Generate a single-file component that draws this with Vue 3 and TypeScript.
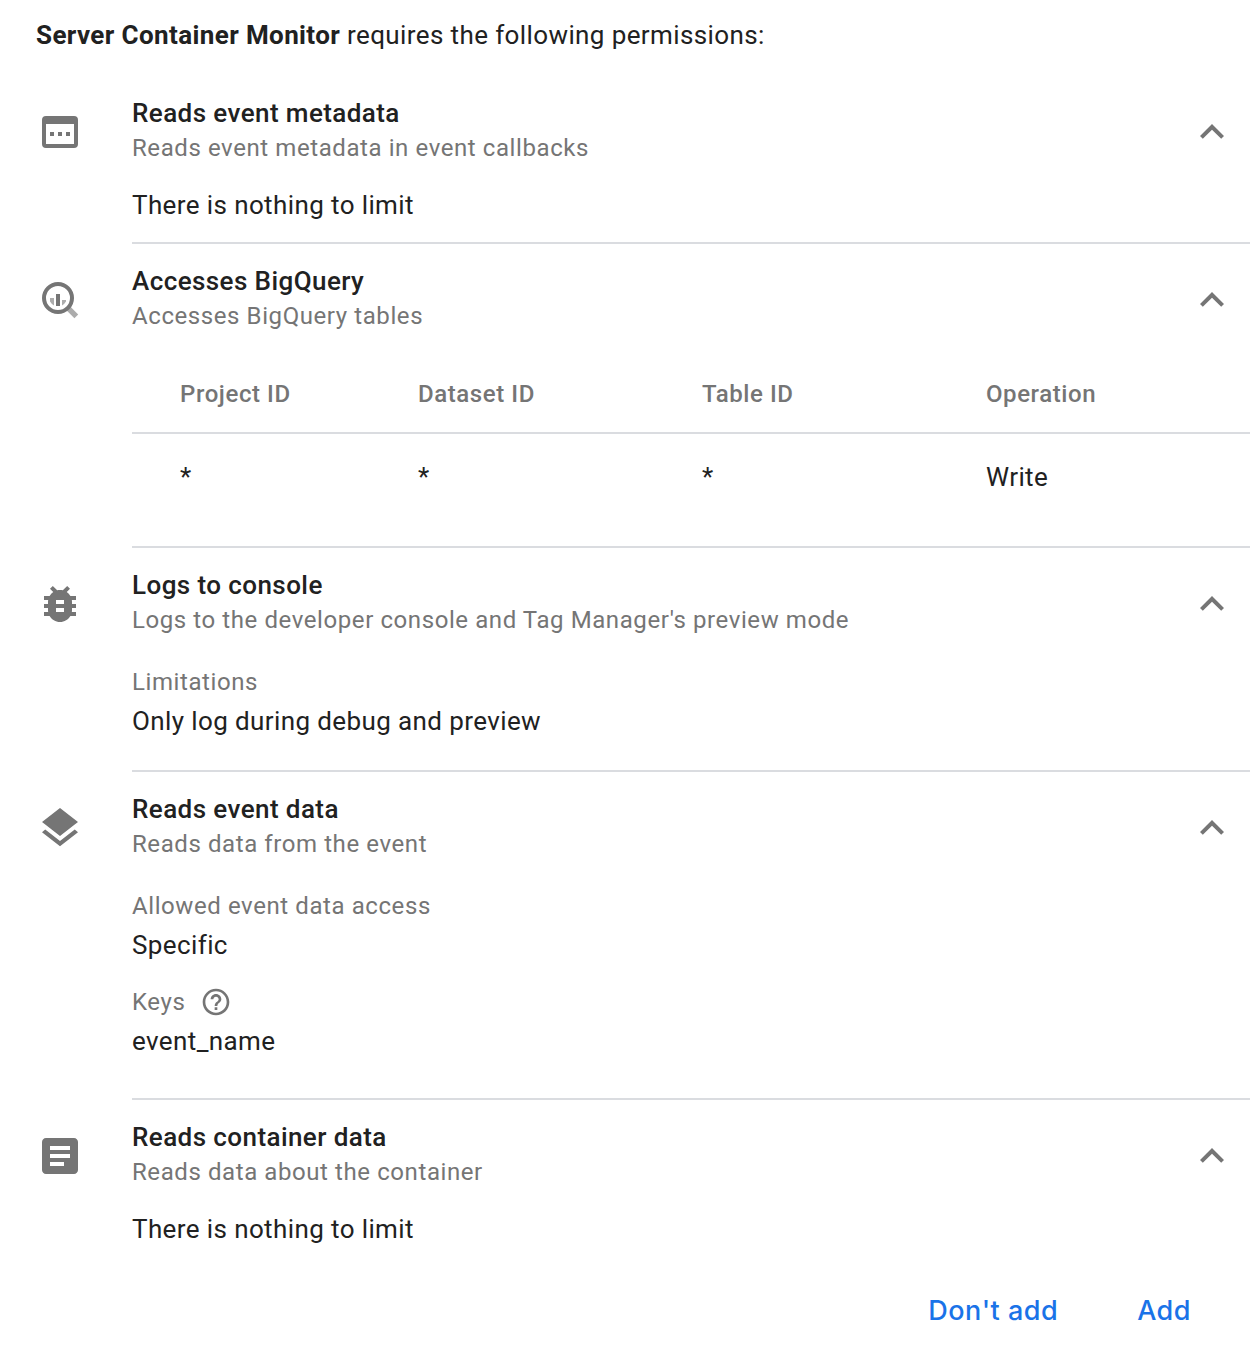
<script setup lang="ts">
interface Field { label: string; value: string; help?: boolean }
interface Permission {
  id: string
  title: string
  description: string
  height: number
  note?: string
  table?: boolean
  fields?: Field[]
}

const permissions: Permission[] = [
  { id: 'metadata', title: 'Reads event metadata', description: 'Reads event metadata in event callbacks', height: 168, note: 'There is nothing to limit' },
  { id: 'bigquery', title: 'Accesses BigQuery', description: 'Accesses BigQuery tables', height: 304, table: true },
  { id: 'console', title: 'Logs to console', description: "Logs to the developer console and Tag Manager's preview mode", height: 224, fields: [{ label: 'Limitations', value: 'Only log during debug and preview' }] },
  { id: 'event', title: 'Reads event data', description: 'Reads data from the event', height: 328, fields: [{ label: 'Allowed event data access', value: 'Specific' }, { label: 'Keys', value: 'event_name', help: true }] },
  { id: 'container', title: 'Reads container data', description: 'Reads data about the container', height: 168, note: 'There is nothing to limit' },
]
const columns = ['Project ID', 'Dataset ID', 'Table ID', 'Operation']
const row = ['*', '*', '*', 'Write']
</script>

<template>
  <main class="dialog">
    <p class="intro"><b>Server Container Monitor</b> requires the following permissions:</p>
    <section v-for="p in permissions" :key="p.id" class="permission" :style="{ height: p.height + 'px' }">
      <svg class="icon" viewBox="0 0 24 24">
        <path v-if="p.id === 'metadata'" fill-rule="evenodd" d="M5 4h14a2 2 0 0 1 2 2v12a2 2 0 0 1-2 2H5a2 2 0 0 1-2-2V6a2 2 0 0 1 2-2zm0 4v10h14V8zM7 12h2v2H7zm4 0h2v2h-2zm4 0h2v2h-2z" />
        <g v-else-if="p.id === 'bigquery'">
          <path opacity=".6" d="M7 11h2v3.7A4.5 4.5 0 0 1 7 12.8zM13 12h2v.8a4.5 4.5 0 0 1-2 1.9zM15.1 17l1.9-1.9 4.1 4.1-1.9 1.9z" />
          <circle cx="11" cy="11" r="7" fill="none" stroke="currentColor" stroke-width="2" />
          <path d="M10 9h2v6h-2z" />
        </g>
        <path v-else-if="p.id === 'console'" d="M20 8h-2.81c-.45-.78-1.07-1.45-1.82-1.96L17 4.41 15.59 3l-2.17 2.17C12.96 5.06 12.49 5 12 5s-.96.06-1.41.17L8.41 3 7 4.41l1.62 1.63C7.88 6.55 7.26 7.22 6.81 8H4v2h2.09c-.05.33-.09.66-.09 1v1H4v2h2v1c0 .34.04.67.09 1H4v2h2.81c1.04 1.79 2.97 3 5.19 3s4.15-1.21 5.19-3H20v-2h-2.09c.05-.33.09-.66.09-1v-1h2v-2h-2v-1c0-.34-.04-.67-.09-1H20V8zm-6 8h-4v-2h4v2zm0-4h-4v-2h4v2z" />
        <path v-else-if="p.id === 'event'" d="M11.99 18.54l-7.37-5.73L3 14.07l9 7 9-7-1.63-1.27-7.38 5.74zM12 16l7.36-5.73L21 9l-9-7-9 7 1.63 1.27L12 16z" />
        <path v-else d="M19 3H5c-1.1 0-2 .9-2 2v14c0 1.1.9 2 2 2h14c1.1 0 2-.9 2-2V5c0-1.1-.9-2-2-2zm-5 14H7v-2h7v2zm3-4H7v-2h10v2zm0-4H7V7h10v2z" />
      </svg>
      <div class="body">
        <header class="heading">
          <div>
            <h2>{{ p.title }}</h2>
            <p class="description">{{ p.description }}</p>
          </div>
          <svg class="chevron" viewBox="0 0 24 24"><path d="M12 8l-6 6 1.41 1.41L12 10.83l4.59 4.58L18 14z" /></svg>
        </header>
        <p v-if="p.note" class="note">{{ p.note }}</p>
        <table v-if="p.table">
          <thead><tr><th v-for="c in columns" :key="c">{{ c }}</th></tr></thead>
          <tbody><tr><td v-for="(v, i) in row" :key="i">{{ v }}</td></tr></tbody>
        </table>
        <dl v-if="p.fields">
          <div v-for="f in p.fields" :key="f.label" class="field">
            <dt>{{ f.label }}
              <svg v-if="f.help" class="help" viewBox="0 0 24 24"><path d="M11 18h2v-2h-2v2zm1-16C6.48 2 2 6.48 2 12s4.48 10 10 10 10-4.48 10-10S17.52 2 12 2zm0 18c-4.41 0-8-3.59-8-8s3.59-8 8-8 8 3.59 8 8-3.59 8-8 8zm0-14c-2.21 0-4 1.79-4 4h2c0-1.1.9-2 2-2s2 .9 2 2c0 2-3 1.75-3 5h2c0-2.25 3-2.5 3-5 0-2.21-1.79-4-4-4z" /></svg>
            </dt>
            <dd>{{ f.value }}</dd>
          </div>
        </dl>
      </div>
    </section>
    <footer class="actions"><button>Don't add</button><button>Add</button></footer>
  </main>
</template>

<style>
body { margin: 0; background: #fff; overflow: hidden; }
</style>

<style scoped>
.dialog { box-sizing: border-box; width: 1250px; height: 1346px; padding-top: 15px; overflow: hidden; font-family: Roboto, sans-serif; font-size: 26px; line-height: 40px; letter-spacing: 0.39px; color: #212121; }
p, h2, dl, dd { margin: 0; }
.intro { height: 61px; padding-left: 36px; }
.intro b { font-weight: 700; }
.permission { display: flex; }
.icon { width: 48px; height: 48px; margin: 32px 48px 0 36px; flex: none; fill: currentColor; color: #757575; }
.body { flex: 1; box-sizing: border-box; border-bottom: 2px solid #dadce0; padding-top: 19px; }
.permission:nth-last-child(2) .body { border-bottom: 0; }
.heading { display: flex; justify-content: space-between; height: 71px; }
h2 { font-size: 26px; font-weight: 500; line-height: 36px; letter-spacing: 0.42px; }
.description { margin-top: 1px; font-size: 24px; line-height: 32px; color: #757575; letter-spacing: 0.585px; }
.chevron { width: 48px; height: 48px; margin: 13px 14px 0 0; fill: #757575; }
.note { padding-top: 19px; }
table { width: 1118px; border-spacing: 0; table-layout: fixed; margin-top: 20px; }
th, td { box-sizing: border-box; padding: 0; text-align: left; }
th { height: 80px; padding-top: 2px; font-size: 24px; font-weight: 500; letter-spacing: 0.58px; color: #757575; border-bottom: 2px solid #dadce0; }
td { height: 86px; font-weight: 400; }
th:first-child, td:first-child { width: 286px; padding-left: 48px; }
th:nth-child(2), th:nth-child(3) { width: 284px; }
dl { padding-top: 24px; }
.field { height: 96px; }
dt { display: flex; align-items: center; height: 40px; color: #757575; font-size: 24px; letter-spacing: 0.585px; }
dd { margin-top: -1px; line-height: 40px; }
.help { width: 32px; height: 32px; margin-left: 15px; fill: #757575; }
.actions { display: flex; justify-content: flex-end; gap: 79px; padding: 23px 59px 0 0; }
button { border: 0; padding: 0; background: none; color: #1a73e8; font: 500 27px/40px Inter, sans-serif; letter-spacing: 0.5px; }
</style>
